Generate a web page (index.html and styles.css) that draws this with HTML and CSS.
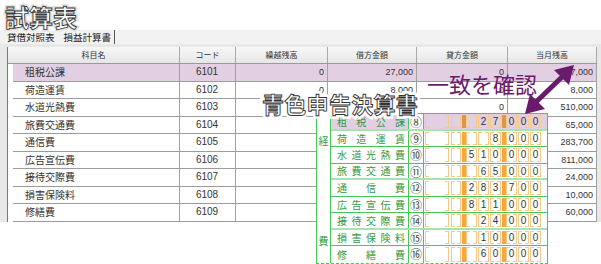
FILE: index.html
```html
<!DOCTYPE html>
<html lang="ja">
<head>
<meta charset="utf-8">
<link rel="stylesheet" href="styles.css">
</head>
<body>
<div class="page">
  <h1 class="title" data-t="試算表">試算表</h1>
  <div class="tabs"><span class="tab">貸借対照表</span><span class="tab active">損益計算書</span></div>
  <div class="panel">
    <div class="sheet">
      <div class="thead">
        <div>科目名</div><div>コード</div><div>繰越残高</div><div>借方金額</div><div>貸方金額</div><div>当月残高</div>
      </div>
      <div class="tbody">
        <div class="row hl"><div class="name">租税公課</div><div class="code">6101</div><div class="num">0</div><div class="num">27,000</div><div class="num">0</div><div class="num">27,000</div></div>
        <div class="row"><div class="name">荷造運賃</div><div class="code">6102</div><div class="num">0</div><div class="num">8,000</div><div class="num">0</div><div class="num">8,000</div></div>
        <div class="row"><div class="name">水道光熱費</div><div class="code">6103</div><div class="num">0</div><div class="num">510,000</div><div class="num">0</div><div class="num">510,000</div></div>
        <div class="row"><div class="name">旅費交通費</div><div class="code">6104</div><div class="num">0</div><div class="num">65,000</div><div class="num">0</div><div class="num">65,000</div></div>
        <div class="row"><div class="name">通信費</div><div class="code">6105</div><div class="num">0</div><div class="num">283,700</div><div class="num">0</div><div class="num">283,700</div></div>
        <div class="row"><div class="name">広告宣伝費</div><div class="code">6106</div><div class="num">0</div><div class="num">811,000</div><div class="num">0</div><div class="num">811,000</div></div>
        <div class="row"><div class="name">接待交際費</div><div class="code">6107</div><div class="num">0</div><div class="num">24,000</div><div class="num">0</div><div class="num">24,000</div></div>
        <div class="row"><div class="name">損害保険料</div><div class="code">6108</div><div class="num">0</div><div class="num">10,000</div><div class="num">0</div><div class="num">10,000</div></div>
        <div class="row"><div class="name">修繕費</div><div class="code">6109</div><div class="num">0</div><div class="num">60,000</div><div class="num">0</div><div class="num">60,000</div></div>
      </div>
    </div>
  </div>

  <div class="form">
    <div class="side"><span>経</span><span>費</span></div>
    <div class="frows">
      <div class="frow hl sep"><div class="lbl"><span>租</span><span>税</span><span>公</span><span>課</span></div><div class="no">⑧</div><div class="amt"><i class="c w"></i><i class="c n"></i><b class="bar"></b><i class="c"></i><i class="c">2</i><i class="c">7</i><b class="bar"></b><i class="c">0</i><i class="c">0</i><i class="c">0</i></div></div>
      <div class="frow"><div class="lbl"><span>荷</span><span>造</span><span>運</span><span>賃</span></div><div class="no">⑨</div><div class="amt"><i class="c w"></i><i class="c n"></i><b class="bar"></b><i class="c"></i><i class="c"></i><i class="c">8</i><b class="bar"></b><i class="c">0</i><i class="c">0</i><i class="c">0</i></div></div>
      <div class="frow"><div class="lbl"><span>水</span><span>道</span><span>光</span><span>熱</span><span>費</span></div><div class="no">⑩</div><div class="amt"><i class="c w"></i><i class="c n"></i><b class="bar"></b><i class="c">5</i><i class="c">1</i><i class="c">0</i><b class="bar"></b><i class="c">0</i><i class="c">0</i><i class="c">0</i></div></div>
      <div class="frow sep"><div class="lbl"><span>旅</span><span>費</span><span>交</span><span>通</span><span>費</span></div><div class="no">⑪</div><div class="amt"><i class="c w"></i><i class="c n"></i><b class="bar"></b><i class="c"></i><i class="c">6</i><i class="c">5</i><b class="bar"></b><i class="c">0</i><i class="c">0</i><i class="c">0</i></div></div>
      <div class="frow"><div class="lbl"><span>通</span><span>信</span><span>費</span></div><div class="no">⑫</div><div class="amt"><i class="c w"></i><i class="c n"></i><b class="bar"></b><i class="c">2</i><i class="c">8</i><i class="c">3</i><b class="bar"></b><i class="c">7</i><i class="c">0</i><i class="c">0</i></div></div>
      <div class="frow"><div class="lbl"><span>広</span><span>告</span><span>宣</span><span>伝</span><span>費</span></div><div class="no">⑬</div><div class="amt"><i class="c w"></i><i class="c n"></i><b class="bar"></b><i class="c">8</i><i class="c">1</i><i class="c">1</i><b class="bar"></b><i class="c">0</i><i class="c">0</i><i class="c">0</i></div></div>
      <div class="frow sep"><div class="lbl"><span>接</span><span>待</span><span>交</span><span>際</span><span>費</span></div><div class="no">⑭</div><div class="amt"><i class="c w"></i><i class="c n"></i><b class="bar"></b><i class="c"></i><i class="c">2</i><i class="c">4</i><b class="bar"></b><i class="c">0</i><i class="c">0</i><i class="c">0</i></div></div>
      <div class="frow"><div class="lbl"><span>損</span><span>害</span><span>保</span><span>険</span><span>料</span></div><div class="no">⑮</div><div class="amt"><i class="c w"></i><i class="c n"></i><b class="bar"></b><i class="c"></i><i class="c">1</i><i class="c">0</i><b class="bar"></b><i class="c">0</i><i class="c">0</i><i class="c">0</i></div></div>
      <div class="frow last"><div class="lbl"><span>修</span><span>繕</span><span>費</span></div><div class="no">⑯</div><div class="amt"><i class="c w"></i><i class="c n"></i><b class="bar"></b><i class="c"></i><i class="c">6</i><i class="c">0</i><b class="bar"></b><i class="c">0</i><i class="c">0</i><i class="c">0</i></div></div>
    </div>
  </div>

  <div class="callout" data-t="青色申告決算書">青色申告決算書</div>
  <div class="check">一致を確認</div>
  <svg class="arrow" width="60" height="56" viewBox="0 0 60 56">
    <line x1="16" y1="40" x2="42" y2="15" stroke="#6a1a6c" stroke-width="5"/>
    <polygon points="54,3 34,8 49,23" fill="#6a1a6c"/>
    <polygon points="5,52 10,32 25,47" fill="#6a1a6c"/>
  </svg>
</div>
</body>
</html>
```

FILE: styles.css
```css
* { box-sizing: border-box; margin: 0; padding: 0; }
html, body { width: 601px; height: 264px; overflow: hidden; background: #fff; }
body {
  font-family: "Noto Sans CJK JP", "Noto Sans", sans-serif;
  font-size: 10px;
  color: #333;
}
.page { position: relative; width: 601px; height: 264px; }

.title {
  position: relative;
  z-index: 0;
  height: 30px;
  padding: 4px 0 0 5px;
  font-size: 24px;
  line-height: 26px;
  font-weight: 700;
  color: #fff;
  -webkit-text-stroke: 0.9px #3a3a3a;
}
.title::after {
  content: attr(data-t);
  position: absolute;
  left: 5px;
  top: 4px;
  z-index: -1;
  color: #e4e4e4;
  -webkit-text-stroke: 4px #e4e4e4;
}

.tabs {
  display: flex;
  height: 14px;
  padding-left: 7px;
  background: #f2f2f2;
  font-size: 9.5px;
  line-height: 14px;
  color: #222;
}
.tab { padding-right: 9px; }
.tab.active { border-right: 1px solid #555; padding-right: 3px; }

.panel {
  background: #e8e8e8;
  padding: 3px 4px 0 7px;
}
.sheet { background: #fff; border-left: 1px solid #7a7a7a; }

.thead {
  display: grid;
  grid-template-columns: 172px 56px 92px 89px 91px 89px;
  height: 17px;
  background: linear-gradient(#f7f7f7, #e6e6e6);
  border-bottom: 1px solid #9a9a9a;
}
.thead > div {
  border-right: 1px solid #a8a8a8;
  text-align: center;
  font-size: 8px;
  line-height: 16px;
  color: #333;
}

.tbody { padding-left: 5px; }
.row {
  display: grid;
  grid-template-columns: 167px 56px 92px 89px 91px 89px;
  height: 17.5px;
  border-bottom: 1px solid #9c9c9c;
  line-height: 16px;
}
.row > div { border-right: 1px solid #a0a0a0; padding: 0 4px 0 3px; white-space: nowrap; overflow: hidden; }
.row .name { padding-left: 12px; }
.row .code { text-align: center; font-family: "Liberation Sans", sans-serif; font-size: 10px; }
.row .num { text-align: right; font-family: "Liberation Sans", sans-serif; font-size: 9px; padding-right: 3px; }
.row.hl { background: #e2cfe2; }

/* blue return form overlay */
.form {
  position: absolute;
  left: 316px;
  top: 113px;
  width: 232px;
  height: 151px;
  display: flex;
  background: #fff;
  border: 1px solid #46c75a;
  border-bottom-style: dashed;
}
.side {
  width: 14px;
  border-right: 1px solid #46c75a;
  display: flex;
  flex-direction: column;
  justify-content: space-between;
  align-items: center;
  padding: 21px 0 16px;
  color: #2f9a43;
  font-size: 10px;
  line-height: 12px;
}
.frows { flex: 1; display: flex; flex-direction: column; }
.frow {
  display: flex;
  height: 16.5px;
  border-bottom: 1px solid #46c75a;
}
.frow.sep { border-bottom: 2px solid #a6e3b0; }
.frow.last { border-bottom: 0; }
.lbl {
  width: 78px;
  display: flex;
  justify-content: space-between;
  align-items: center;
  padding: 0 3px 0 6px;
  color: #2f9a43;
  font-size: 10px;
  border-right: 1px solid #46c75a;
}
.no {
  width: 15px;
  text-align: center;
  font-size: 12px;
  line-height: 15px;
  color: #3a4a3a;
  border-right: 1px solid #46c75a;
}
.amt {
  width: 123px;
  display: flex;
  align-items: stretch;
  padding: 1px 0 1px 1px;
}
.frow.hl .lbl, .frow.hl .amt { background: #e2cfe2; }
.c {
  width: 11px;
  margin-right: 1px;
  font-style: normal;
  font-family: "Liberation Sans", sans-serif;
  font-size: 10px;
  line-height: 13px;
  text-align: center;
  color: #333;
  border-left: 1px solid #f7c98c;
  border-right: 1px solid #f7c98c;
  background:
    linear-gradient(to right, #f7c98c 0 3px, transparent 3px calc(100% - 3px), #f7c98c calc(100% - 3px)) top / 100% 1px no-repeat,
    linear-gradient(to right, #f7c98c 0 3px, transparent 3px calc(100% - 3px), #f7c98c calc(100% - 3px)) bottom / 100% 1px no-repeat;
}
.c.w { width: 24px; margin-right: 2px; }
.c.n { width: 10px; margin-right: 1px; }
.bar { width: 4px; background: #f6a93a; }
.frow.hl .bar { background: #dc9551; }

.callout {
  position: absolute;
  z-index: 1;
  left: 262px;
  top: 90px;
  font-size: 22px;
  line-height: 26px;
  font-weight: 700;
  letter-spacing: 0.3px;
  color: #fff;
  -webkit-text-stroke: 0.9px #333;
}
.callout::after {
  content: attr(data-t);
  position: absolute;
  left: 0;
  top: 0;
  z-index: -1;
  color: #fff;
  -webkit-text-stroke: 6px #fff;
}

.check {
  position: absolute;
  left: 427px;
  top: 70px;
  font-size: 22px;
  line-height: 26px;
  color: #6a1a6c;
}
.arrow { position: absolute; left: 520px; top: 62px; }
```
